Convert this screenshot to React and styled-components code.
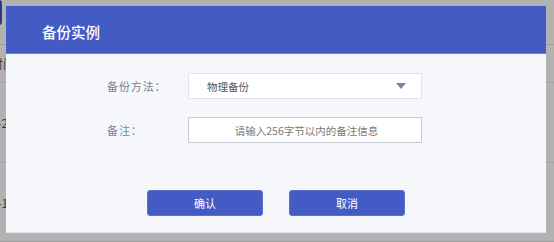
import React from "react";
import styled, { createGlobalStyle } from "styled-components";

const GlobalStyle = createGlobalStyle`
  html, body { margin: 0; padding: 0; }
  body {
    width: 554px;
    height: 242px;
    overflow: hidden;
    background: #ffffff;
    font-family: "Noto Sans CJK SC", "Noto Sans", sans-serif;
  }
`;

const Page = styled.div`
  display: flex;
  flex-direction: column;
  width: 554px;
  height: 242px;
  overflow: hidden;
`;

const Toolbar = styled.div`
  height: 44px;
  border-bottom: 1px solid #e6e6e6;
  display: flex;
  align-items: flex-start;
`;

const ToolButton = styled.div`
  margin-left: -70px;
  width: 72px;
  height: 25px;
  background: #3e55b8;
  border-radius: 3px;
`;

const Row = styled.div`
  height: ${(p) => p.h}px;
  border-bottom: 1px solid #e6e6e6;
  display: flex;
  align-items: center;
  color: #555;
  font-size: 12px;
`;

const Cut = styled.span`
  margin-left: ${(p) => p.off}px;
  white-space: nowrap;
`;

const Overlay = styled.div`
  position: fixed;
  inset: 0;
  background: rgba(0, 0, 0, 0.3);
  padding: 6px;
`;

const Dialog = styled.div`
  width: 540px;
  height: 227px;
  background: #f6f7fb;
  border-bottom: 1px solid #e2e4ec;
  box-sizing: border-box;
  display: flex;
  flex-direction: column;
`;

const Header = styled.div`
  height: 48px;
  background: #435cc4;
  border-bottom: 1px solid #6a7fd4;
  box-sizing: border-box;
  display: flex;
  align-items: center;
  padding: 3px 0 0 36px;
  color: #fff;
  font-size: 14.5px;
  font-weight: 500;
`;

const Body = styled.div`
  flex: 1;
  display: flex;
  flex-direction: column;
  padding: 19px 0 0 101px;
`;

const FormRow = styled.div`
  display: flex;
  align-items: center;
  height: 26px;
  margin-bottom: 18px;
`;

const Label = styled.div`
  width: 81px;
  color: #7c8194;
  font-size: 11px;
  letter-spacing: 0.9px;
`;

const Field = styled.div`
  width: 234px;
  height: 26px;
  box-sizing: border-box;
  background: #fff;
  border: 1px solid ${(p) => (p.dark ? "#c8cbd8" : "#e0e3ec")};
  display: flex;
  align-items: center;
  justify-content: ${(p) => (p.center ? "center" : "space-between")};
  padding: 0 15px 0 18px;
  font-size: 10.5px;
  color: ${(p) => (p.center ? "#7a7a7a" : "#555")};
`;

const Caret = styled.div`
  width: 0;
  height: 0;
  border-left: 5px solid transparent;
  border-right: 5px solid transparent;
  border-top: 6px solid #7d82a6;
`;

const Actions = styled.div`
  display: flex;
  gap: 26px;
  margin: 29px 0 0 40px;
`;

const Button = styled.button`
  width: 116px;
  height: 26px;
  border: 1px solid #5a70cf;
  border-radius: 3px;
  background: #435bc4;
  color: #fff;
  font-family: inherit;
  font-size: 11px;
  padding: 0;
  cursor: pointer;
`;

function App() {
  return (
    <>
      <GlobalStyle />
      <Page>
        <Toolbar>
          <ToolButton />
        </Toolbar>
        <Row h={37}>
          <Cut off={-9}>时间</Cut>
        </Row>
        <Row h={80}>
          <Cut off={-16}>04-2</Cut>
        </Row>
        <Row h={78}>
          <Cut off={-16}>04-1</Cut>
        </Row>
      </Page>
      <Overlay>
        <Dialog>
          <Header>备份实例</Header>
          <Body>
            <FormRow>
              <Label>备份方法：</Label>
              <Field>
                物理备份
                <Caret />
              </Field>
            </FormRow>
            <FormRow>
              <Label>备注：</Label>
              <Field dark center>请输入256字节以内的备注信息</Field>
            </FormRow>
            <Actions>
              <Button>确认</Button>
              <Button>取消</Button>
            </Actions>
          </Body>
        </Dialog>
      </Overlay>
    </>
  );
}

export default App;
